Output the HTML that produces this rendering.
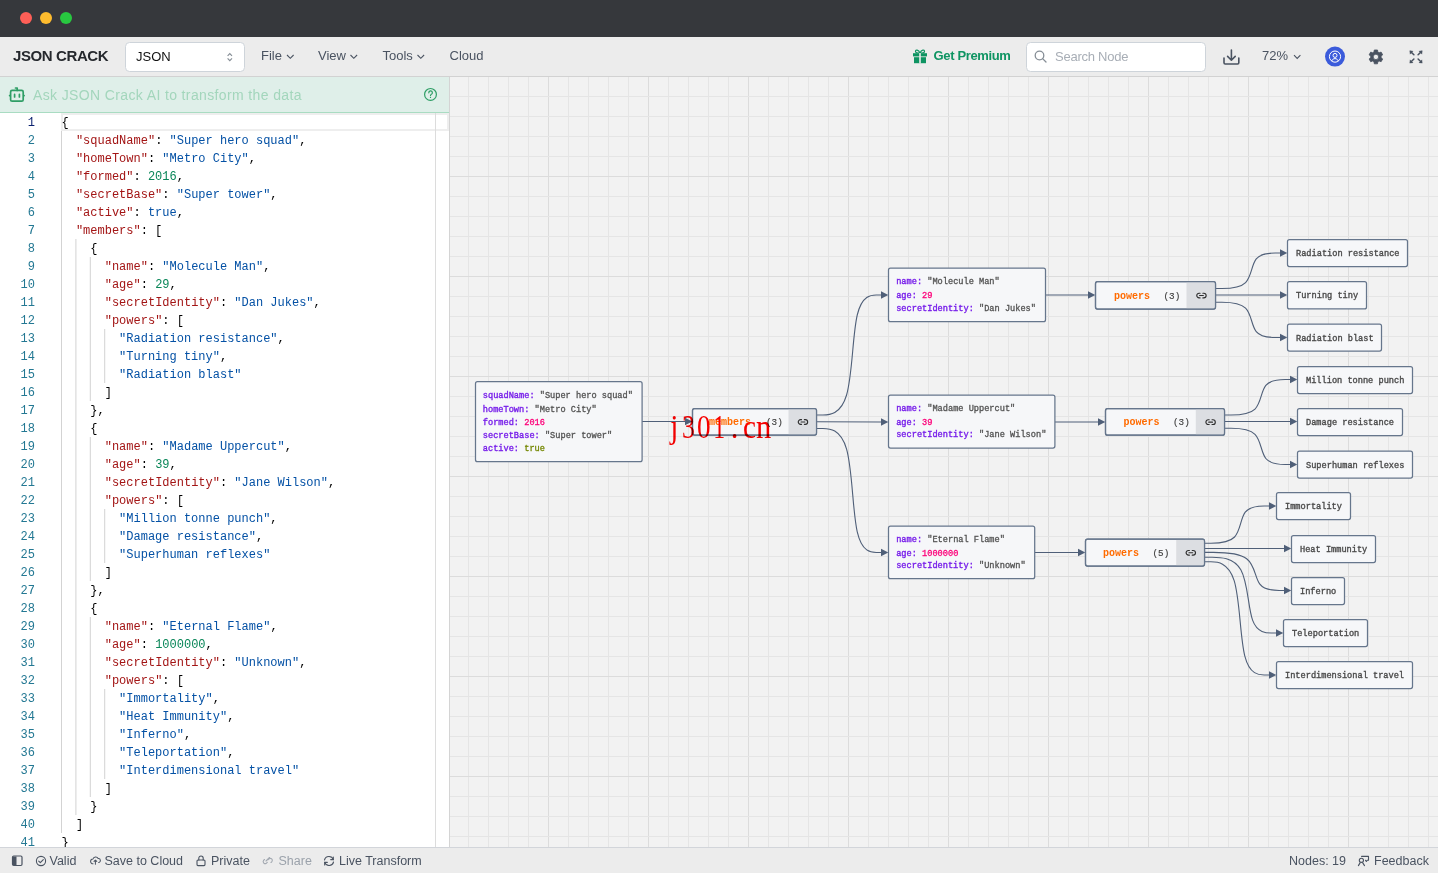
<!DOCTYPE html><html><head><meta charset="utf-8"><title>JSON Crack</title><style>
html,body{margin:0;padding:0;width:1438px;height:873px;overflow:hidden;background:#f2f2f2}
svg{display:block;will-change:transform}
text{font-family:'Liberation Sans',sans-serif}
.m{font-family:"Liberation Mono",monospace}
</style></head><body>
<svg width="1438" height="873" viewBox="0 0 1438 873">
<rect x="0" y="0" width="1438" height="873" fill="#f2f2f2"/>
<rect x="468" y="77" width="1" height="771" fill="#e5e5e5"/><rect x="488" y="77" width="1" height="771" fill="#e5e5e5"/><rect x="508" y="77" width="1" height="771" fill="#e5e5e5"/><rect x="528" y="77" width="1" height="771" fill="#e5e5e5"/><rect x="548" y="77" width="1" height="771" fill="#dcdcdc"/><rect x="568" y="77" width="1" height="771" fill="#e5e5e5"/><rect x="588" y="77" width="1" height="771" fill="#e5e5e5"/><rect x="608" y="77" width="1" height="771" fill="#e5e5e5"/><rect x="628" y="77" width="1" height="771" fill="#e5e5e5"/><rect x="648" y="77" width="1" height="771" fill="#dcdcdc"/><rect x="668" y="77" width="1" height="771" fill="#e5e5e5"/><rect x="688" y="77" width="1" height="771" fill="#e5e5e5"/><rect x="708" y="77" width="1" height="771" fill="#e5e5e5"/><rect x="728" y="77" width="1" height="771" fill="#e5e5e5"/><rect x="748" y="77" width="1" height="771" fill="#dcdcdc"/><rect x="768" y="77" width="1" height="771" fill="#e5e5e5"/><rect x="788" y="77" width="1" height="771" fill="#e5e5e5"/><rect x="808" y="77" width="1" height="771" fill="#e5e5e5"/><rect x="828" y="77" width="1" height="771" fill="#e5e5e5"/><rect x="848" y="77" width="1" height="771" fill="#dcdcdc"/><rect x="868" y="77" width="1" height="771" fill="#e5e5e5"/><rect x="888" y="77" width="1" height="771" fill="#e5e5e5"/><rect x="908" y="77" width="1" height="771" fill="#e5e5e5"/><rect x="928" y="77" width="1" height="771" fill="#e5e5e5"/><rect x="948" y="77" width="1" height="771" fill="#dcdcdc"/><rect x="968" y="77" width="1" height="771" fill="#e5e5e5"/><rect x="988" y="77" width="1" height="771" fill="#e5e5e5"/><rect x="1008" y="77" width="1" height="771" fill="#e5e5e5"/><rect x="1028" y="77" width="1" height="771" fill="#e5e5e5"/><rect x="1048" y="77" width="1" height="771" fill="#dcdcdc"/><rect x="1068" y="77" width="1" height="771" fill="#e5e5e5"/><rect x="1088" y="77" width="1" height="771" fill="#e5e5e5"/><rect x="1108" y="77" width="1" height="771" fill="#e5e5e5"/><rect x="1128" y="77" width="1" height="771" fill="#e5e5e5"/><rect x="1148" y="77" width="1" height="771" fill="#dcdcdc"/><rect x="1168" y="77" width="1" height="771" fill="#e5e5e5"/><rect x="1188" y="77" width="1" height="771" fill="#e5e5e5"/><rect x="1208" y="77" width="1" height="771" fill="#e5e5e5"/><rect x="1228" y="77" width="1" height="771" fill="#e5e5e5"/><rect x="1248" y="77" width="1" height="771" fill="#dcdcdc"/><rect x="1268" y="77" width="1" height="771" fill="#e5e5e5"/><rect x="1288" y="77" width="1" height="771" fill="#e5e5e5"/><rect x="1308" y="77" width="1" height="771" fill="#e5e5e5"/><rect x="1328" y="77" width="1" height="771" fill="#e5e5e5"/><rect x="1348" y="77" width="1" height="771" fill="#dcdcdc"/><rect x="1368" y="77" width="1" height="771" fill="#e5e5e5"/><rect x="1388" y="77" width="1" height="771" fill="#e5e5e5"/><rect x="1408" y="77" width="1" height="771" fill="#e5e5e5"/><rect x="1428" y="77" width="1" height="771" fill="#e5e5e5"/><rect x="450" y="96" width="988" height="1" fill="#e5e5e5"/><rect x="450" y="116" width="988" height="1" fill="#e5e5e5"/><rect x="450" y="136" width="988" height="1" fill="#e5e5e5"/><rect x="450" y="156" width="988" height="1" fill="#e5e5e5"/><rect x="450" y="176" width="988" height="1" fill="#dcdcdc"/><rect x="450" y="196" width="988" height="1" fill="#e5e5e5"/><rect x="450" y="216" width="988" height="1" fill="#e5e5e5"/><rect x="450" y="236" width="988" height="1" fill="#e5e5e5"/><rect x="450" y="256" width="988" height="1" fill="#e5e5e5"/><rect x="450" y="276" width="988" height="1" fill="#dcdcdc"/><rect x="450" y="296" width="988" height="1" fill="#e5e5e5"/><rect x="450" y="316" width="988" height="1" fill="#e5e5e5"/><rect x="450" y="336" width="988" height="1" fill="#e5e5e5"/><rect x="450" y="356" width="988" height="1" fill="#e5e5e5"/><rect x="450" y="376" width="988" height="1" fill="#dcdcdc"/><rect x="450" y="396" width="988" height="1" fill="#e5e5e5"/><rect x="450" y="416" width="988" height="1" fill="#e5e5e5"/><rect x="450" y="436" width="988" height="1" fill="#e5e5e5"/><rect x="450" y="456" width="988" height="1" fill="#e5e5e5"/><rect x="450" y="476" width="988" height="1" fill="#dcdcdc"/><rect x="450" y="496" width="988" height="1" fill="#e5e5e5"/><rect x="450" y="516" width="988" height="1" fill="#e5e5e5"/><rect x="450" y="536" width="988" height="1" fill="#e5e5e5"/><rect x="450" y="556" width="988" height="1" fill="#e5e5e5"/><rect x="450" y="576" width="988" height="1" fill="#dcdcdc"/><rect x="450" y="596" width="988" height="1" fill="#e5e5e5"/><rect x="450" y="616" width="988" height="1" fill="#e5e5e5"/><rect x="450" y="636" width="988" height="1" fill="#e5e5e5"/><rect x="450" y="656" width="988" height="1" fill="#e5e5e5"/><rect x="450" y="676" width="988" height="1" fill="#dcdcdc"/><rect x="450" y="696" width="988" height="1" fill="#e5e5e5"/><rect x="450" y="716" width="988" height="1" fill="#e5e5e5"/><rect x="450" y="736" width="988" height="1" fill="#e5e5e5"/><rect x="450" y="756" width="988" height="1" fill="#e5e5e5"/><rect x="450" y="776" width="988" height="1" fill="#dcdcdc"/><rect x="450" y="796" width="988" height="1" fill="#e5e5e5"/><rect x="450" y="816" width="988" height="1" fill="#e5e5e5"/><rect x="450" y="836" width="988" height="1" fill="#e5e5e5"/>
<path d="M642.00,421.50 L685.00,421.50" fill="none" stroke="#4f5f78" stroke-width="1.1"/><path d="M685.00,417.80 L692.30,421.50 L685.00,425.20 Z" fill="#4f5f78"/><path d="M1045.00,295.00 L1088.00,295.00" fill="none" stroke="#4f5f78" stroke-width="1.1"/><path d="M1088.00,291.30 L1095.30,295.00 L1088.00,298.70 Z" fill="#4f5f78"/><path d="M1055.00,422.00 L1098.00,422.00" fill="none" stroke="#4f5f78" stroke-width="1.1"/><path d="M1098.00,418.30 L1105.30,422.00 L1098.00,425.70 Z" fill="#4f5f78"/><path d="M1035.00,552.50 L1078.00,552.50" fill="none" stroke="#4f5f78" stroke-width="1.1"/><path d="M1078.00,548.80 L1085.30,552.50 L1078.00,556.20 Z" fill="#4f5f78"/><path d="M817.00,415.00 L822.92,415.00 C828.83,415.00 840.67,415.00 846.58,395.00 C852.50,375.00 852.50,335.00 857.25,315.00 C862.00,295.00 871.50,295.00 876.25,295.00 L881.00,295.00" fill="none" stroke="#4f5f78" stroke-width="1.1"/><path d="M881.00,291.30 L888.30,295.00 L881.00,298.70 Z" fill="#4f5f78"/><path d="M817.00,421.70 L881.00,422.00" fill="none" stroke="#4f5f78" stroke-width="1.1"/><path d="M881.00,418.30 L888.30,422.00 L881.00,425.70 Z" fill="#4f5f78"/><path d="M817.00,428.50 L822.92,428.50 C828.83,428.50 840.67,428.50 846.58,449.17 C852.50,469.83 852.50,511.17 857.25,531.83 C862.00,552.50 871.50,552.50 876.25,552.50 L881.00,552.50" fill="none" stroke="#4f5f78" stroke-width="1.1"/><path d="M881.00,548.80 L888.30,552.50 L881.00,556.20 Z" fill="#4f5f78"/><path d="M1216.00,288.50 L1221.92,288.50 C1227.83,288.50 1239.67,288.50 1245.58,282.58 C1251.50,276.67 1251.50,264.83 1256.25,258.92 C1261.00,253.00 1270.50,253.00 1275.25,253.00 L1280.00,253.00" fill="none" stroke="#4f5f78" stroke-width="1.1"/><path d="M1280.00,249.30 L1287.30,253.00 L1280.00,256.70 Z" fill="#4f5f78"/><path d="M1216.00,295.00 L1280.00,295.00" fill="none" stroke="#4f5f78" stroke-width="1.1"/><path d="M1280.00,291.30 L1287.30,295.00 L1280.00,298.70 Z" fill="#4f5f78"/><path d="M1216.00,302.30 L1221.92,302.30 C1227.83,302.30 1239.67,302.30 1245.58,308.17 C1251.50,314.03 1251.50,325.77 1256.25,331.63 C1261.00,337.50 1270.50,337.50 1275.25,337.50 L1280.00,337.50" fill="none" stroke="#4f5f78" stroke-width="1.1"/><path d="M1280.00,333.80 L1287.30,337.50 L1280.00,341.20 Z" fill="#4f5f78"/><path d="M1225.00,415.00 L1231.00,415.00 C1237.00,415.00 1249.00,415.00 1255.00,409.08 C1261.00,403.17 1261.00,391.33 1265.83,385.42 C1270.67,379.50 1280.33,379.50 1285.17,379.50 L1290.00,379.50" fill="none" stroke="#4f5f78" stroke-width="1.1"/><path d="M1290.00,375.80 L1297.30,379.50 L1290.00,383.20 Z" fill="#4f5f78"/><path d="M1225.00,421.50 L1290.00,421.50" fill="none" stroke="#4f5f78" stroke-width="1.1"/><path d="M1290.00,417.80 L1297.30,421.50 L1290.00,425.20 Z" fill="#4f5f78"/><path d="M1225.00,428.30 L1231.00,428.30 C1237.00,428.30 1249.00,428.30 1255.00,434.33 C1261.00,440.37 1261.00,452.43 1265.83,458.47 C1270.67,464.50 1280.33,464.50 1285.17,464.50 L1290.00,464.50" fill="none" stroke="#4f5f78" stroke-width="1.1"/><path d="M1290.00,460.80 L1297.30,464.50 L1290.00,468.20 Z" fill="#4f5f78"/><path d="M1205.00,543.20 L1210.92,543.20 C1216.83,543.20 1228.67,543.20 1234.58,537.00 C1240.50,530.80 1240.50,518.40 1245.25,512.20 C1250.00,506.00 1259.50,506.00 1264.25,506.00 L1269.00,506.00" fill="none" stroke="#4f5f78" stroke-width="1.1"/><path d="M1269.00,502.30 L1276.30,506.00 L1269.00,509.70 Z" fill="#4f5f78"/><path d="M1205.00,548.50 L1284.00,548.50" fill="none" stroke="#4f5f78" stroke-width="1.1"/><path d="M1284.00,544.80 L1291.30,548.50 L1284.00,552.20 Z" fill="#4f5f78"/><path d="M1205.00,552.40 L1213.33,552.40 C1221.67,552.40 1238.33,552.40 1246.67,558.75 C1255.00,565.10 1255.00,577.80 1259.83,584.15 C1264.67,590.50 1274.33,590.50 1279.17,590.50 L1284.00,590.50" fill="none" stroke="#4f5f78" stroke-width="1.1"/><path d="M1284.00,586.80 L1291.30,590.50 L1284.00,594.20 Z" fill="#4f5f78"/><path d="M1205.00,557.20 L1212.17,557.20 C1219.33,557.20 1233.67,557.20 1240.83,569.83 C1248.00,582.47 1248.00,607.73 1252.67,620.37 C1257.33,633.00 1266.67,633.00 1271.33,633.00 L1276.00,633.00" fill="none" stroke="#4f5f78" stroke-width="1.1"/><path d="M1276.00,629.30 L1283.30,633.00 L1276.00,636.70 Z" fill="#4f5f78"/><path d="M1205.00,561.80 L1210.83,561.80 C1216.67,561.80 1228.33,561.80 1234.17,580.67 C1240.00,599.53 1240.00,637.27 1244.83,656.13 C1249.67,675.00 1259.33,675.00 1264.17,675.00 L1269.00,675.00" fill="none" stroke="#4f5f78" stroke-width="1.1"/><path d="M1269.00,671.30 L1276.30,675.00 L1269.00,678.70 Z" fill="#4f5f78"/>
<rect x="475.5" y="381.7" width="166.6" height="80.0" rx="2" fill="#f6f7f9" stroke="#66768c" stroke-width="1.25"/>
<text class="m" x="482.8" y="397.90" font-size="8.64" xml:space="preserve"><tspan fill="#761cea" stroke="#761cea" stroke-width="0.35">squadName: </tspan><tspan fill="#535353" stroke="#535353" stroke-width="0.3">"Super hero squad"</tspan></text><text class="m" x="482.8" y="411.70" font-size="8.64" xml:space="preserve"><tspan fill="#761cea" stroke="#761cea" stroke-width="0.35">homeTown: </tspan><tspan fill="#535353" stroke="#535353" stroke-width="0.3">"Metro City"</tspan></text><text class="m" x="482.8" y="424.70" font-size="8.64" xml:space="preserve"><tspan fill="#761cea" stroke="#761cea" stroke-width="0.35">formed: </tspan><tspan fill="#fd0079" stroke="#fd0079" stroke-width="0.3">2016</tspan></text><text class="m" x="482.8" y="437.70" font-size="8.64" xml:space="preserve"><tspan fill="#761cea" stroke="#761cea" stroke-width="0.35">secretBase: </tspan><tspan fill="#535353" stroke="#535353" stroke-width="0.3">"Super tower"</tspan></text><text class="m" x="482.8" y="450.70" font-size="8.64" xml:space="preserve"><tspan fill="#761cea" stroke="#761cea" stroke-width="0.35">active: </tspan><tspan fill="#748700" stroke="#748700" stroke-width="0.3">true</tspan></text>
<rect x="888.5" y="268.1" width="157.0" height="53.6" rx="2" fill="#f6f7f9" stroke="#66768c" stroke-width="1.25"/>
<text class="m" x="896.2" y="284.10" font-size="8.64" xml:space="preserve"><tspan fill="#761cea" stroke="#761cea" stroke-width="0.35">name: </tspan><tspan fill="#535353" stroke="#535353" stroke-width="0.3">"Molecule Man"</tspan></text><text class="m" x="896.2" y="297.90" font-size="8.64" xml:space="preserve"><tspan fill="#761cea" stroke="#761cea" stroke-width="0.35">age: </tspan><tspan fill="#fd0079" stroke="#fd0079" stroke-width="0.3">29</tspan></text><text class="m" x="896.2" y="310.80" font-size="8.64" xml:space="preserve"><tspan fill="#761cea" stroke="#761cea" stroke-width="0.35">secretIdentity: </tspan><tspan fill="#535353" stroke="#535353" stroke-width="0.3">"Dan Jukes"</tspan></text>
<rect x="888.5" y="395.0" width="166.4" height="53.0" rx="2" fill="#f6f7f9" stroke="#66768c" stroke-width="1.25"/>
<text class="m" x="896.2" y="410.80" font-size="8.64" xml:space="preserve"><tspan fill="#761cea" stroke="#761cea" stroke-width="0.35">name: </tspan><tspan fill="#535353" stroke="#535353" stroke-width="0.3">"Madame Uppercut"</tspan></text><text class="m" x="896.2" y="424.70" font-size="8.64" xml:space="preserve"><tspan fill="#761cea" stroke="#761cea" stroke-width="0.35">age: </tspan><tspan fill="#fd0079" stroke="#fd0079" stroke-width="0.3">39</tspan></text><text class="m" x="896.2" y="437.20" font-size="8.64" xml:space="preserve"><tspan fill="#761cea" stroke="#761cea" stroke-width="0.35">secretIdentity: </tspan><tspan fill="#535353" stroke="#535353" stroke-width="0.3">"Jane Wilson"</tspan></text>
<rect x="888.5" y="526.1" width="146.2" height="52.6" rx="2" fill="#f6f7f9" stroke="#66768c" stroke-width="1.25"/>
<text class="m" x="896.2" y="542.00" font-size="8.64" xml:space="preserve"><tspan fill="#761cea" stroke="#761cea" stroke-width="0.35">name: </tspan><tspan fill="#535353" stroke="#535353" stroke-width="0.3">"Eternal Flame"</tspan></text><text class="m" x="896.2" y="556.00" font-size="8.64" xml:space="preserve"><tspan fill="#761cea" stroke="#761cea" stroke-width="0.35">age: </tspan><tspan fill="#fd0079" stroke="#fd0079" stroke-width="0.3">1000000</tspan></text><text class="m" x="896.2" y="568.00" font-size="8.64" xml:space="preserve"><tspan fill="#761cea" stroke="#761cea" stroke-width="0.35">secretIdentity: </tspan><tspan fill="#535353" stroke="#535353" stroke-width="0.3">"Unknown"</tspan></text>
<rect x="692.5" y="408.5" width="124.0" height="26.6" rx="2" fill="#f6f7f9" stroke="#66768c" stroke-width="1.25"/>
<rect x="788.5" y="409.2" width="27.3" height="25.2" fill="#dcdee2"/>
<rect x="692.5" y="408.5" width="124.0" height="26.6" rx="2" fill="none" stroke="#66768c" stroke-width="1.25"/>
<text class="m" x="709.0" y="425.1" font-size="10" font-weight="bold" fill="#ff6b00">members</text>
<text class="m" x="766.0" y="425.1" font-size="9.3" fill="#3f3f3f" stroke="#3f3f3f" stroke-width="0.15">(3)</text>
<g transform="translate(797.31,416.36) scale(0.470)" fill="none" stroke="#2e2e2e" stroke-width="2.4" stroke-linecap="round" stroke-linejoin="round"><path d="M9 17H7A5 5 0 0 1 7 7h2M15 7h2a5 5 0 1 1 0 10h-2M8 12h8"/></g>
<rect x="1095.5" y="281.7" width="120.0" height="27.3" rx="2" fill="#f6f7f9" stroke="#66768c" stroke-width="1.25"/>
<rect x="1186.5" y="282.4" width="28.3" height="25.9" fill="#dcdee2"/>
<rect x="1095.5" y="281.7" width="120.0" height="27.3" rx="2" fill="none" stroke="#66768c" stroke-width="1.25"/>
<text class="m" x="1114.0" y="298.6" font-size="10" font-weight="bold" fill="#ff6b00">powers</text>
<text class="m" x="1163.5" y="298.6" font-size="9.3" fill="#3f3f3f" stroke="#3f3f3f" stroke-width="0.15">(3)</text>
<g transform="translate(1195.81,289.91) scale(0.470)" fill="none" stroke="#2e2e2e" stroke-width="2.4" stroke-linecap="round" stroke-linejoin="round"><path d="M9 17H7A5 5 0 0 1 7 7h2M15 7h2a5 5 0 1 1 0 10h-2M8 12h8"/></g>
<rect x="1105.5" y="408.7" width="119.0" height="26.5" rx="2" fill="#f6f7f9" stroke="#66768c" stroke-width="1.25"/>
<rect x="1195.8" y="409.4" width="28.0" height="25.1" fill="#dcdee2"/>
<rect x="1105.5" y="408.7" width="119.0" height="26.5" rx="2" fill="none" stroke="#66768c" stroke-width="1.25"/>
<text class="m" x="1123.5" y="425.2" font-size="10" font-weight="bold" fill="#ff6b00">powers</text>
<text class="m" x="1173.0" y="425.2" font-size="9.3" fill="#3f3f3f" stroke="#3f3f3f" stroke-width="0.15">(3)</text>
<g transform="translate(1204.96,416.51) scale(0.470)" fill="none" stroke="#2e2e2e" stroke-width="2.4" stroke-linecap="round" stroke-linejoin="round"><path d="M9 17H7A5 5 0 0 1 7 7h2M15 7h2a5 5 0 1 1 0 10h-2M8 12h8"/></g>
<rect x="1085.5" y="539.2" width="119.0" height="26.8" rx="2" fill="#f6f7f9" stroke="#66768c" stroke-width="1.25"/>
<rect x="1176.2" y="539.9" width="27.6" height="25.4" fill="#dcdee2"/>
<rect x="1085.5" y="539.2" width="119.0" height="26.8" rx="2" fill="none" stroke="#66768c" stroke-width="1.25"/>
<text class="m" x="1103.0" y="555.9" font-size="10" font-weight="bold" fill="#ff6b00">powers</text>
<text class="m" x="1152.5" y="555.9" font-size="9.3" fill="#3f3f3f" stroke="#3f3f3f" stroke-width="0.15">(5)</text>
<g transform="translate(1185.16,547.16) scale(0.470)" fill="none" stroke="#2e2e2e" stroke-width="2.4" stroke-linecap="round" stroke-linejoin="round"><path d="M9 17H7A5 5 0 0 1 7 7h2M15 7h2a5 5 0 1 1 0 10h-2M8 12h8"/></g>
<rect x="1287.5" y="239.5" width="120.0" height="27.0" rx="2" fill="#f6f7f9" stroke="#66768c" stroke-width="1.25"/>
<text class="m" x="1296.0" y="256.0" font-size="8.64" fill="#4a4a4a" stroke="#4a4a4a" stroke-width="0.35" xml:space="preserve">Radiation resistance</text>
<rect x="1287.5" y="281.5" width="79.0" height="27.4" rx="2" fill="#f6f7f9" stroke="#66768c" stroke-width="1.25"/>
<text class="m" x="1296.0" y="298.2" font-size="8.64" fill="#4a4a4a" stroke="#4a4a4a" stroke-width="0.35" xml:space="preserve">Turning tiny</text>
<rect x="1287.5" y="324.1" width="94.0" height="27.0" rx="2" fill="#f6f7f9" stroke="#66768c" stroke-width="1.25"/>
<text class="m" x="1296.0" y="340.6" font-size="8.64" fill="#4a4a4a" stroke="#4a4a4a" stroke-width="0.35" xml:space="preserve">Radiation blast</text>
<rect x="1297.5" y="366.5" width="115.0" height="27.0" rx="2" fill="#f6f7f9" stroke="#66768c" stroke-width="1.25"/>
<text class="m" x="1306.0" y="383.0" font-size="8.64" fill="#4a4a4a" stroke="#4a4a4a" stroke-width="0.35" xml:space="preserve">Million tonne punch</text>
<rect x="1297.5" y="408.5" width="105.0" height="27.0" rx="2" fill="#f6f7f9" stroke="#66768c" stroke-width="1.25"/>
<text class="m" x="1306.0" y="425.0" font-size="8.64" fill="#4a4a4a" stroke="#4a4a4a" stroke-width="0.35" xml:space="preserve">Damage resistance</text>
<rect x="1297.5" y="451.1" width="115.0" height="27.0" rx="2" fill="#f6f7f9" stroke="#66768c" stroke-width="1.25"/>
<text class="m" x="1306.0" y="467.6" font-size="8.64" fill="#4a4a4a" stroke="#4a4a4a" stroke-width="0.35" xml:space="preserve">Superhuman reflexes</text>
<rect x="1276.5" y="492.5" width="74.0" height="27.0" rx="2" fill="#f6f7f9" stroke="#66768c" stroke-width="1.25"/>
<text class="m" x="1285.0" y="509.0" font-size="8.64" fill="#4a4a4a" stroke="#4a4a4a" stroke-width="0.35" xml:space="preserve">Immortality</text>
<rect x="1291.5" y="535.5" width="84.0" height="27.0" rx="2" fill="#f6f7f9" stroke="#66768c" stroke-width="1.25"/>
<text class="m" x="1300.0" y="552.0" font-size="8.64" fill="#4a4a4a" stroke="#4a4a4a" stroke-width="0.35" xml:space="preserve">Heat Immunity</text>
<rect x="1291.5" y="577.5" width="53.0" height="27.0" rx="2" fill="#f6f7f9" stroke="#66768c" stroke-width="1.25"/>
<text class="m" x="1300.0" y="594.0" font-size="8.64" fill="#4a4a4a" stroke="#4a4a4a" stroke-width="0.35" xml:space="preserve">Inferno</text>
<rect x="1283.5" y="619.5" width="84.0" height="27.0" rx="2" fill="#f6f7f9" stroke="#66768c" stroke-width="1.25"/>
<text class="m" x="1292.0" y="636.0" font-size="8.64" fill="#4a4a4a" stroke="#4a4a4a" stroke-width="0.35" xml:space="preserve">Teleportation</text>
<rect x="1276.5" y="661.5" width="136.0" height="27.0" rx="2" fill="#f6f7f9" stroke="#66768c" stroke-width="1.25"/>
<text class="m" x="1285.0" y="678.0" font-size="8.64" fill="#4a4a4a" stroke="#4a4a4a" stroke-width="0.35" xml:space="preserve">Interdimensional travel</text>
<g style="mix-blend-mode:multiply"><g transform="translate(672.00,438.4) scale(0.85,1)"><text x="-2.10" y="0" style="font-family:'Liberation Serif', serif" font-size="34" fill="#ff0000">j</text></g><g transform="translate(688.40,438.4) scale(0.76,1)"><text x="-8.50" y="0" style="font-family:'Liberation Serif', serif" font-size="34" fill="#ff0000">3</text></g><g transform="translate(703.40,438.4) scale(0.80,1)"><text x="-8.00" y="0" style="font-family:'Liberation Serif', serif" font-size="34" fill="#ff0000">0</text></g><g transform="translate(719.10,438.4) scale(0.70,1)"><text x="-8.50" y="0" style="font-family:'Liberation Serif', serif" font-size="34" fill="#ff0000">1</text></g><g transform="translate(734.20,438.4) scale(0.90,1)"><text x="-3.70" y="0" style="font-family:'Liberation Serif', serif" font-size="34" fill="#ff0000">.</text></g><g transform="translate(749.00,438.4) scale(0.86,1)"><text x="-6.90" y="0" style="font-family:'Liberation Serif', serif" font-size="34" fill="#ff0000">c</text></g><g transform="translate(763.20,438.4) scale(0.90,1)"><text x="-8.00" y="0" style="font-family:'Liberation Serif', serif" font-size="34" fill="#ff0000">n</text></g></g>
<rect x="0" y="77" width="449" height="771" fill="#ffffff"/>
<rect x="449" y="77" width="1" height="771" fill="#d4d4d4"/>
<rect x="0" y="77" width="449" height="35" fill="#dfefe9"/>
<rect x="0" y="112" width="449" height="1" fill="#a9dcc2"/>
<g fill="none" stroke="#2f9e66" stroke-width="1.7" stroke-linecap="round" stroke-linejoin="round"><rect x="10.6" y="90.4" width="12.6" height="10.8" rx="1.5"/><path d="M15.5,88 h1.7 v2.4"/><path d="M9.6,95.6 h0.2 M23.9,95.6 h0.2"/><path d="M14.6,94.4 v2.6 M19.4,94.4 v2.6"/></g>
<text x="33" y="100" font-size="14" fill="#a3d6bc" letter-spacing="0.37">Ask JSON Crack AI to transform the data</text>
<g fill="none" stroke="#2f9e66" stroke-width="1.2" stroke-linecap="round"><circle cx="430.5" cy="94.4" r="5.9"/><path d="M428.8,92.8 a1.8,1.8 0 1 1 2.4,1.6 c-0.5,0.3 -0.7,0.6 -0.7,1.2"/><path d="M430.5,97.3 v0.1"/></g>
<rect x="62" y="114" width="386" height="16" fill="none" stroke="#eeeeee" stroke-width="2"/>
<rect x="61.0" y="131" width="1" height="702" fill="#d3d3d3"/><rect x="75.4" y="239" width="1" height="576" fill="#d3d3d3"/><rect x="89.8" y="257" width="1" height="144" fill="#d3d3d3"/><rect x="89.8" y="437" width="1" height="144" fill="#d3d3d3"/><rect x="89.8" y="617" width="1" height="180" fill="#d3d3d3"/><rect x="104.2" y="329" width="1" height="54" fill="#d3d3d3"/><rect x="104.2" y="509" width="1" height="54" fill="#d3d3d3"/><rect x="104.2" y="689" width="1" height="90" fill="#d3d3d3"/>
<text class="m" x="35" y="126" font-size="12" text-anchor="end" fill="#0b216f">1</text><text class="m" x="61.5" y="126" font-size="12" xml:space="preserve"><tspan fill="#000000">{</tspan></text><text class="m" x="35" y="144" font-size="12" text-anchor="end" fill="#237893">2</text><text class="m" x="61.5" y="144" font-size="12" xml:space="preserve"><tspan fill="#000000">  </tspan><tspan fill="#a31515">"squadName"</tspan><tspan fill="#000000">: </tspan><tspan fill="#0451a5">"Super hero squad"</tspan><tspan fill="#000000">,</tspan></text><text class="m" x="35" y="162" font-size="12" text-anchor="end" fill="#237893">3</text><text class="m" x="61.5" y="162" font-size="12" xml:space="preserve"><tspan fill="#000000">  </tspan><tspan fill="#a31515">"homeTown"</tspan><tspan fill="#000000">: </tspan><tspan fill="#0451a5">"Metro City"</tspan><tspan fill="#000000">,</tspan></text><text class="m" x="35" y="180" font-size="12" text-anchor="end" fill="#237893">4</text><text class="m" x="61.5" y="180" font-size="12" xml:space="preserve"><tspan fill="#000000">  </tspan><tspan fill="#a31515">"formed"</tspan><tspan fill="#000000">: </tspan><tspan fill="#098658">2016</tspan><tspan fill="#000000">,</tspan></text><text class="m" x="35" y="198" font-size="12" text-anchor="end" fill="#237893">5</text><text class="m" x="61.5" y="198" font-size="12" xml:space="preserve"><tspan fill="#000000">  </tspan><tspan fill="#a31515">"secretBase"</tspan><tspan fill="#000000">: </tspan><tspan fill="#0451a5">"Super tower"</tspan><tspan fill="#000000">,</tspan></text><text class="m" x="35" y="216" font-size="12" text-anchor="end" fill="#237893">6</text><text class="m" x="61.5" y="216" font-size="12" xml:space="preserve"><tspan fill="#000000">  </tspan><tspan fill="#a31515">"active"</tspan><tspan fill="#000000">: </tspan><tspan fill="#0451a5">true</tspan><tspan fill="#000000">,</tspan></text><text class="m" x="35" y="234" font-size="12" text-anchor="end" fill="#237893">7</text><text class="m" x="61.5" y="234" font-size="12" xml:space="preserve"><tspan fill="#000000">  </tspan><tspan fill="#a31515">"members"</tspan><tspan fill="#000000">: [</tspan></text><text class="m" x="35" y="252" font-size="12" text-anchor="end" fill="#237893">8</text><text class="m" x="61.5" y="252" font-size="12" xml:space="preserve"><tspan fill="#000000">    {</tspan></text><text class="m" x="35" y="270" font-size="12" text-anchor="end" fill="#237893">9</text><text class="m" x="61.5" y="270" font-size="12" xml:space="preserve"><tspan fill="#000000">      </tspan><tspan fill="#a31515">"name"</tspan><tspan fill="#000000">: </tspan><tspan fill="#0451a5">"Molecule Man"</tspan><tspan fill="#000000">,</tspan></text><text class="m" x="35" y="288" font-size="12" text-anchor="end" fill="#237893">10</text><text class="m" x="61.5" y="288" font-size="12" xml:space="preserve"><tspan fill="#000000">      </tspan><tspan fill="#a31515">"age"</tspan><tspan fill="#000000">: </tspan><tspan fill="#098658">29</tspan><tspan fill="#000000">,</tspan></text><text class="m" x="35" y="306" font-size="12" text-anchor="end" fill="#237893">11</text><text class="m" x="61.5" y="306" font-size="12" xml:space="preserve"><tspan fill="#000000">      </tspan><tspan fill="#a31515">"secretIdentity"</tspan><tspan fill="#000000">: </tspan><tspan fill="#0451a5">"Dan Jukes"</tspan><tspan fill="#000000">,</tspan></text><text class="m" x="35" y="324" font-size="12" text-anchor="end" fill="#237893">12</text><text class="m" x="61.5" y="324" font-size="12" xml:space="preserve"><tspan fill="#000000">      </tspan><tspan fill="#a31515">"powers"</tspan><tspan fill="#000000">: [</tspan></text><text class="m" x="35" y="342" font-size="12" text-anchor="end" fill="#237893">13</text><text class="m" x="61.5" y="342" font-size="12" xml:space="preserve"><tspan fill="#000000">        </tspan><tspan fill="#0451a5">"Radiation resistance"</tspan><tspan fill="#000000">,</tspan></text><text class="m" x="35" y="360" font-size="12" text-anchor="end" fill="#237893">14</text><text class="m" x="61.5" y="360" font-size="12" xml:space="preserve"><tspan fill="#000000">        </tspan><tspan fill="#0451a5">"Turning tiny"</tspan><tspan fill="#000000">,</tspan></text><text class="m" x="35" y="378" font-size="12" text-anchor="end" fill="#237893">15</text><text class="m" x="61.5" y="378" font-size="12" xml:space="preserve"><tspan fill="#000000">        </tspan><tspan fill="#0451a5">"Radiation blast"</tspan></text><text class="m" x="35" y="396" font-size="12" text-anchor="end" fill="#237893">16</text><text class="m" x="61.5" y="396" font-size="12" xml:space="preserve"><tspan fill="#000000">      ]</tspan></text><text class="m" x="35" y="414" font-size="12" text-anchor="end" fill="#237893">17</text><text class="m" x="61.5" y="414" font-size="12" xml:space="preserve"><tspan fill="#000000">    },</tspan></text><text class="m" x="35" y="432" font-size="12" text-anchor="end" fill="#237893">18</text><text class="m" x="61.5" y="432" font-size="12" xml:space="preserve"><tspan fill="#000000">    {</tspan></text><text class="m" x="35" y="450" font-size="12" text-anchor="end" fill="#237893">19</text><text class="m" x="61.5" y="450" font-size="12" xml:space="preserve"><tspan fill="#000000">      </tspan><tspan fill="#a31515">"name"</tspan><tspan fill="#000000">: </tspan><tspan fill="#0451a5">"Madame Uppercut"</tspan><tspan fill="#000000">,</tspan></text><text class="m" x="35" y="468" font-size="12" text-anchor="end" fill="#237893">20</text><text class="m" x="61.5" y="468" font-size="12" xml:space="preserve"><tspan fill="#000000">      </tspan><tspan fill="#a31515">"age"</tspan><tspan fill="#000000">: </tspan><tspan fill="#098658">39</tspan><tspan fill="#000000">,</tspan></text><text class="m" x="35" y="486" font-size="12" text-anchor="end" fill="#237893">21</text><text class="m" x="61.5" y="486" font-size="12" xml:space="preserve"><tspan fill="#000000">      </tspan><tspan fill="#a31515">"secretIdentity"</tspan><tspan fill="#000000">: </tspan><tspan fill="#0451a5">"Jane Wilson"</tspan><tspan fill="#000000">,</tspan></text><text class="m" x="35" y="504" font-size="12" text-anchor="end" fill="#237893">22</text><text class="m" x="61.5" y="504" font-size="12" xml:space="preserve"><tspan fill="#000000">      </tspan><tspan fill="#a31515">"powers"</tspan><tspan fill="#000000">: [</tspan></text><text class="m" x="35" y="522" font-size="12" text-anchor="end" fill="#237893">23</text><text class="m" x="61.5" y="522" font-size="12" xml:space="preserve"><tspan fill="#000000">        </tspan><tspan fill="#0451a5">"Million tonne punch"</tspan><tspan fill="#000000">,</tspan></text><text class="m" x="35" y="540" font-size="12" text-anchor="end" fill="#237893">24</text><text class="m" x="61.5" y="540" font-size="12" xml:space="preserve"><tspan fill="#000000">        </tspan><tspan fill="#0451a5">"Damage resistance"</tspan><tspan fill="#000000">,</tspan></text><text class="m" x="35" y="558" font-size="12" text-anchor="end" fill="#237893">25</text><text class="m" x="61.5" y="558" font-size="12" xml:space="preserve"><tspan fill="#000000">        </tspan><tspan fill="#0451a5">"Superhuman reflexes"</tspan></text><text class="m" x="35" y="576" font-size="12" text-anchor="end" fill="#237893">26</text><text class="m" x="61.5" y="576" font-size="12" xml:space="preserve"><tspan fill="#000000">      ]</tspan></text><text class="m" x="35" y="594" font-size="12" text-anchor="end" fill="#237893">27</text><text class="m" x="61.5" y="594" font-size="12" xml:space="preserve"><tspan fill="#000000">    },</tspan></text><text class="m" x="35" y="612" font-size="12" text-anchor="end" fill="#237893">28</text><text class="m" x="61.5" y="612" font-size="12" xml:space="preserve"><tspan fill="#000000">    {</tspan></text><text class="m" x="35" y="630" font-size="12" text-anchor="end" fill="#237893">29</text><text class="m" x="61.5" y="630" font-size="12" xml:space="preserve"><tspan fill="#000000">      </tspan><tspan fill="#a31515">"name"</tspan><tspan fill="#000000">: </tspan><tspan fill="#0451a5">"Eternal Flame"</tspan><tspan fill="#000000">,</tspan></text><text class="m" x="35" y="648" font-size="12" text-anchor="end" fill="#237893">30</text><text class="m" x="61.5" y="648" font-size="12" xml:space="preserve"><tspan fill="#000000">      </tspan><tspan fill="#a31515">"age"</tspan><tspan fill="#000000">: </tspan><tspan fill="#098658">1000000</tspan><tspan fill="#000000">,</tspan></text><text class="m" x="35" y="666" font-size="12" text-anchor="end" fill="#237893">31</text><text class="m" x="61.5" y="666" font-size="12" xml:space="preserve"><tspan fill="#000000">      </tspan><tspan fill="#a31515">"secretIdentity"</tspan><tspan fill="#000000">: </tspan><tspan fill="#0451a5">"Unknown"</tspan><tspan fill="#000000">,</tspan></text><text class="m" x="35" y="684" font-size="12" text-anchor="end" fill="#237893">32</text><text class="m" x="61.5" y="684" font-size="12" xml:space="preserve"><tspan fill="#000000">      </tspan><tspan fill="#a31515">"powers"</tspan><tspan fill="#000000">: [</tspan></text><text class="m" x="35" y="702" font-size="12" text-anchor="end" fill="#237893">33</text><text class="m" x="61.5" y="702" font-size="12" xml:space="preserve"><tspan fill="#000000">        </tspan><tspan fill="#0451a5">"Immortality"</tspan><tspan fill="#000000">,</tspan></text><text class="m" x="35" y="720" font-size="12" text-anchor="end" fill="#237893">34</text><text class="m" x="61.5" y="720" font-size="12" xml:space="preserve"><tspan fill="#000000">        </tspan><tspan fill="#0451a5">"Heat Immunity"</tspan><tspan fill="#000000">,</tspan></text><text class="m" x="35" y="738" font-size="12" text-anchor="end" fill="#237893">35</text><text class="m" x="61.5" y="738" font-size="12" xml:space="preserve"><tspan fill="#000000">        </tspan><tspan fill="#0451a5">"Inferno"</tspan><tspan fill="#000000">,</tspan></text><text class="m" x="35" y="756" font-size="12" text-anchor="end" fill="#237893">36</text><text class="m" x="61.5" y="756" font-size="12" xml:space="preserve"><tspan fill="#000000">        </tspan><tspan fill="#0451a5">"Teleportation"</tspan><tspan fill="#000000">,</tspan></text><text class="m" x="35" y="774" font-size="12" text-anchor="end" fill="#237893">37</text><text class="m" x="61.5" y="774" font-size="12" xml:space="preserve"><tspan fill="#000000">        </tspan><tspan fill="#0451a5">"Interdimensional travel"</tspan></text><text class="m" x="35" y="792" font-size="12" text-anchor="end" fill="#237893">38</text><text class="m" x="61.5" y="792" font-size="12" xml:space="preserve"><tspan fill="#000000">      ]</tspan></text><text class="m" x="35" y="810" font-size="12" text-anchor="end" fill="#237893">39</text><text class="m" x="61.5" y="810" font-size="12" xml:space="preserve"><tspan fill="#000000">    }</tspan></text><text class="m" x="35" y="828" font-size="12" text-anchor="end" fill="#237893">40</text><text class="m" x="61.5" y="828" font-size="12" xml:space="preserve"><tspan fill="#000000">  ]</tspan></text><text class="m" x="35" y="846" font-size="12" text-anchor="end" fill="#237893">41</text><text class="m" x="61.5" y="846" font-size="12" xml:space="preserve"><tspan fill="#000000">}</tspan></text>
<rect x="435" y="113" width="1" height="735" fill="#dcdcdc"/>
<rect x="0" y="0" width="1438" height="37" fill="#36383c"/>
<circle cx="26" cy="18" r="6" fill="#fe5f57"/><circle cx="46" cy="18" r="6" fill="#febc2e"/><circle cx="66" cy="18" r="6" fill="#28c840"/>
<rect x="0" y="37" width="1438" height="39" fill="#ececec"/>
<rect x="0" y="76" width="1438" height="1" fill="#d2d2d2"/>
<text x="13" y="61" font-size="15" font-weight="bold" fill="#25282d" letter-spacing="-0.4">JSON CRACK</text>
<rect x="125.5" y="42.5" width="119" height="29" rx="4" fill="#ffffff" stroke="#ced4da"/>
<text x="136" y="61" font-size="13" fill="#111111">JSON</text>
<path d="M227.6,55.8 l2.2,-2.2 l2.2,2.2 M227.6,58.4 l2.2,2.2 l2.2,-2.2" fill="none" stroke="#868e96" stroke-width="1.15"/>
<text x="261.0" y="60" font-size="13" fill="#4a5361">File</text>
<path d="M287.0,55 l3.3,3.3 l3.3,-3.3" fill="none" stroke="#4a5361" stroke-width="1.1"/>
<text x="318.0" y="60" font-size="13" fill="#4a5361">View</text>
<path d="M350.5,55 l3.3,3.3 l3.3,-3.3" fill="none" stroke="#4a5361" stroke-width="1.1"/>
<text x="382.5" y="60" font-size="13" fill="#4a5361">Tools</text>
<path d="M417.5,55 l3.3,3.3 l3.3,-3.3" fill="none" stroke="#4a5361" stroke-width="1.1"/>
<text x="449.5" y="60" font-size="13" fill="#4a5361">Cloud</text>
<g fill="#0e9462"><rect x="913" y="53.2" width="14" height="3.2"/><rect x="914" y="57.2" width="12" height="6"/></g>
<path d="M920,53 c-1.5,-3.5 -4.5,-3.5 -4.5,-1.6 c0,1.2 2,1.6 4.5,1.6 c2.5,0 4.5,-0.4 4.5,-1.6 c0,-1.9 -3,-1.9 -4.5,1.6 z" fill="none" stroke="#0e9462" stroke-width="1.2"/>
<rect x="919.2" y="53" width="1.6" height="10.5" fill="#ececec"/>
<text x="933.5" y="60" font-size="13" font-weight="bold" fill="#0e9462" letter-spacing="-0.35">Get Premium</text>
<rect x="1026.5" y="42.5" width="179" height="29" rx="4" fill="#ffffff" stroke="#ced4da"/>
<g fill="none" stroke="#868e96" stroke-width="1.3"><circle cx="1039.5" cy="55.5" r="4.3"/><path d="M1042.6,58.6 l3.4,3.4" stroke-linecap="round"/></g>
<text x="1055" y="61" font-size="13" fill="#a8aeb6" letter-spacing="-0.25">Search Node</text>
<g fill="none" stroke="#4a5361" stroke-width="1.6" stroke-linecap="round" stroke-linejoin="round"><path d="M1224,58 v4.8 a1.2,1.2 0 0 0 1.2,1.2 h12.4 a1.2,1.2 0 0 0 1.2,-1.2 v-4.8"/><path d="M1231.4,50 v10 M1227.6,56.4 l3.8,3.8 l3.8,-3.8"/></g>
<text x="1262" y="59.6" font-size="13" fill="#4a5361">72%</text>
<path d="M1294,55.2 l3.2,3.2 l3.2,-3.2" fill="none" stroke="#4a5361" stroke-width="1.1"/>
<circle cx="1335" cy="56.6" r="10" fill="#3b5bdb"/>
<g fill="none" stroke="#ffffff" stroke-width="1"><circle cx="1335" cy="56.6" r="5.6"/><circle cx="1335" cy="55.4" r="2"/><path d="M1331.6,61 c0.8,-1.6 2,-2.4 3.4,-2.4 c1.4,0 2.6,0.8 3.4,2.4"/></g>
<g transform="translate(1375.9,56.9)"><path fill="#4a5361" fill-rule="evenodd" stroke="#4a5361" stroke-width="0.8" stroke-linejoin="round" d="M-1.95,-4.82 L-1.60,-6.92 L1.60,-6.92 L1.95,-4.82 L3.20,-4.10 L5.19,-4.84 L6.79,-2.08 L5.15,-0.72 L5.15,0.72 L6.79,2.08 L5.19,4.84 L3.20,4.10 L1.95,4.82 L1.60,6.92 L-1.60,6.92 L-1.95,4.82 L-3.20,4.10 L-5.19,4.84 L-6.79,2.08 L-5.15,0.72 L-5.15,-0.72 L-6.79,-2.08 L-5.19,-4.84 L-3.20,-4.10 Z M2.7,0 A2.7,2.7 0 1 0 -2.7,0 A2.7,2.7 0 1 0 2.7,0 Z"/></g>
<g stroke="#4a5361" stroke-width="1.5" stroke-linecap="round" fill="#4a5361"><path d="M1410.6,51.6 L1413.9,54.8 M1421.4,51.6 L1418.1,54.8 M1410.6,62.2 L1413.9,59 M1421.4,62.2 L1418.1,59" fill="none"/></g>
<g fill="#4a5361"><path d="M1409.6,50.6 L1413.4,50.9 L1409.9,54.4 Z M1422.4,50.6 L1418.6,50.9 L1422.1,54.4 Z M1409.6,63.2 L1413.4,62.9 L1409.9,59.4 Z M1422.4,63.2 L1418.6,62.9 L1422.1,59.4 Z"/></g>
<rect x="0" y="848" width="1438" height="25" fill="#ececec"/>
<rect x="0" y="847" width="1438" height="1" fill="#d2d5da"/>
<g><rect x="12.5" y="856" width="9.5" height="9.5" rx="1.2" fill="none" stroke="#4a5361" stroke-width="1.2"/><rect x="13" y="856.5" width="3.5" height="8.5" fill="#4a5361"/></g>
<g fill="none" stroke="#4a5361" stroke-width="1.1" stroke-linecap="round" stroke-linejoin="round"><circle cx="41" cy="861" r="4.6"/><path d="M38.7,861.1 l1.6,1.6 l3,-3.1"/></g>
<text x="49.5" y="865" font-size="12.5" fill="#4a5361">Valid</text>
<g transform="translate(95,861) scale(0.8) translate(-95,-861)" fill="none" stroke="#4a5361" stroke-width="1.3" stroke-linecap="round" stroke-linejoin="round"><path d="M92.5,864.5 a3,3 0 0 1 0,-6 a3.4,3.4 0 0 1 6.4,-0.6 a2.5,2.5 0 0 1 0.6,5 M95.5,859.8 v5.2 M93.8,861.5 l1.7,-1.7 l1.7,1.7"/></g>
<text x="104.5" y="865" font-size="12.5" fill="#4a5361">Save to Cloud</text>
<g fill="none" stroke="#4a5361" stroke-width="1.1" stroke-linecap="round"><rect x="197" y="860" width="8" height="5.6" rx="1"/><path d="M198.8,860 v-1.8 a2.2,2.2 0 0 1 4.4,0 v1.8"/></g>
<text x="211" y="865" font-size="12.5" fill="#4a5361">Private</text>
<g fill="none" stroke="#a4aab2" stroke-width="1.1" stroke-linecap="round"><path d="M266,863 l3.5,-3.5 M264.5,861.5 l-0.9,0.9 a2,2 0 0 0 2.8,2.8 l0.9,-0.9 M271,864.5 l0.9,-0.9 a2,2 0 0 0 -2.8,-2.8 l-0.9,0.9" transform="translate(0,-2)"/></g>
<text x="278.5" y="865" font-size="12.5" fill="#9ba2ab">Share</text>
<g fill="none" stroke="#4a5361" stroke-width="1.1" stroke-linecap="round"><path d="M324.5,860 a4.6,4.6 0 0 1 8.8,-0.4 M333.5,862 a4.6,4.6 0 0 1 -8.8,0.4"/><path d="M333.3,857 v2.6 h-2.6 M324.7,865 v-2.6 h2.6"/></g>
<text x="339" y="865" font-size="12.5" fill="#4a5361">Live Transform</text>
<text x="1289" y="865" font-size="12.5" fill="#4a5361">Nodes: 19</text>
<g fill="none" stroke="#4a5361" stroke-width="1.1" stroke-linecap="round" stroke-linejoin="round"><circle cx="1361.4" cy="860.3" r="2.1"/><path d="M1358.4,865.6 L1360.2,862.6 M1364.5,865.6 L1362.6,862.6"/><path d="M1361.6,856.4 H1368.5 V860.3 H1367.2 L1366.4,861.5 L1365.5,860.3"/></g>
<text x="1374" y="865" font-size="12.5" fill="#4a5361">Feedback</text>
</svg></body></html>
